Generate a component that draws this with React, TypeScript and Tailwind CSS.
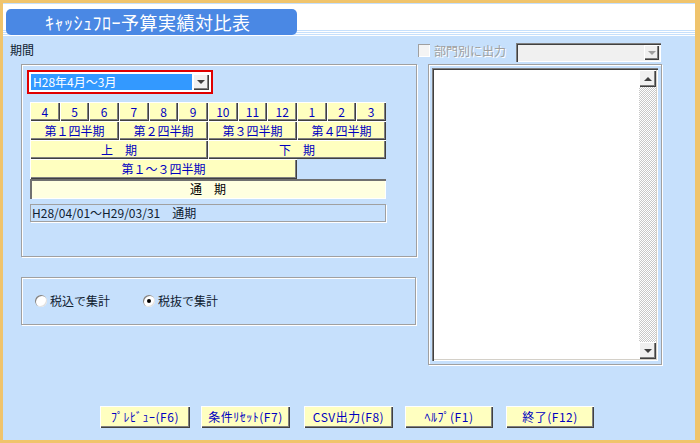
import React from 'react'
import clsx from 'clsx'

const raised = 'shadow-[inset_1px_1px_0_#ffffff,inset_-1px_-1px_0_#404040,inset_-2px_-2px_0_#808080]'
const etched = 'border border-[#a0a0a0] shadow-[inset_1px_1px_0_#ffffff,1px_1px_0_#ffffff]'

function Btn({ children, className }: { children?: React.ReactNode; className?: string }) {
  return (
    <div className={clsx('flex items-center justify-center bg-[#ffffc0] text-[#0000c0] text-[12px] leading-none', raised, className)}>
      {children}
    </div>
  )
}

function Arrow({ up, color = '#404040' }: { up?: boolean; color?: string }) {
  return (
    <svg width="8" height="4" viewBox="0 0 8 4">
      <polygon points={up ? '0,4 8,4 4,0' : '0,0 8,0 4,4'} fill={color} />
    </svg>
  )
}

function Radio({ checked, label }: { checked?: boolean; label: string }) {
  return (
    <div className="flex items-center">
      <div className="w-[12px] h-[12px] rounded-full bg-white flex items-center justify-center shadow-[inset_1px_1px_0_#808080,inset_-1px_-1px_0_#e0e0e0]">
        {checked && <div className="w-[4px] h-[4px] rounded-full bg-black" />}
      </div>
      <span className="ml-[3px] text-[12px] text-[#102030]">{label}</span>
    </div>
  )
}

const months = ['4', '5', '6', '7', '8', '9', '10', '11', '12', '1', '2', '3']
const quarters = ['第１四半期', '第２四半期', '第３四半期', '第４四半期']
const bottomButtons = [
  { label: 'ﾌﾟﾚﾋﾞｭｰ(F6)', cls: 'ml-[97px] w-[90px]' },
  { label: '条件ﾘｾｯﾄ(F7)', cls: 'ml-[11px] w-[89px]' },
  { label: 'CSV出力(F8)', cls: 'ml-[14px] w-[89px]' },
  { label: 'ﾍﾙﾌﾟ(F1)', cls: 'ml-[12px] w-[88px]' },
  { label: '終了(F12)', cls: 'ml-[13px] w-[88px]' },
]

export default function App() {
  return (
    <div className="w-[700px] h-[443px] bg-[#f0c46c] pt-[3px] pl-[3px] pr-[5px] pb-[3px] font-['Noto_Sans_CJK_JP',sans-serif]">
      <div className="h-full flex flex-col bg-[#c6e0fc]">
        {/* title bar */}
        <div className="relative h-[34px] bg-white border-t border-[#c6e0fc] shrink-0">
          <div className="absolute inset-x-0 bottom-0 h-[8px] bg-[repeating-linear-gradient(to_bottom,#ffffff_0px,#ffffff_1px,#c6e0fc_1px,#c6e0fc_2px)]" />
          <div className="relative ml-[3px] mt-[5px] h-[26px] w-[291px] rounded-[5px] bg-[#4a88e4] text-white text-[18px] leading-[26px] pl-[39px] tracking-[0.5px]">
            ｷｬｯｼｭﾌﾛｰ予算実績対比表
          </div>
        </div>

        <div className="flex">
          {/* left column */}
          <div className="w-[415px] shrink-0">
            <div className="h-[27px] pl-[7px] pt-[5px] text-[12px] leading-[16px] text-[#102030]">期間</div>
            <div className={clsx('ml-[18px] w-[396px] h-[193px] p-[5px]', etched)}>
              <div className="w-[186px] h-[24px] border-2 border-[#e00000] flex bg-white p-[2px] gap-[1px]">
                <div className="flex-1 bg-[#3399ff] text-white text-[12px] leading-[16px] pl-[2px]">H28年4月～3月</div>
                <div className={clsx('w-[16px] bg-[#f0f0f0] flex items-center justify-center', raised)}>
                  <Arrow />
                </div>
              </div>
              <div className="ml-[3px] mt-[8px] w-[356px] grid grid-cols-12 grid-rows-[19px_19px_19px_20px_20px]">
                {months.map(m => (
                  <Btn key={m}>{m}</Btn>
                ))}
                {quarters.map(q => (
                  <Btn key={q} className="col-span-3">{q}</Btn>
                ))}
                <Btn className="col-span-6">上　期</Btn>
                <Btn className="col-span-6">下　期</Btn>
                <Btn className="col-span-9">第１～３四半期</Btn>
                <div className="col-span-3" />
                <div className="col-span-12 flex items-center justify-center bg-[#ffffe0] text-black text-[12px] leading-none shadow-[inset_2px_2px_0_#707070,inset_-1px_-1px_0_#ffffff]">
                  通　期
                </div>
              </div>
              <div className="ml-[3px] mt-[5px] w-[356px] h-[18px] border border-[#a0a0a0] shadow-[1px_1px_0_#ffffff] text-[12px] leading-[16px] text-[#102030] pl-[1px]">
                H28/04/01～H29/03/31　通期
              </div>
            </div>
            <div className={clsx('mt-[20px] ml-[18px] w-[395px] h-[48px] flex items-center pl-[13px]', etched)}>
              <Radio label="税込で集計" />
              <div className="ml-[33px]">
                <Radio checked label="税抜で集計" />
              </div>
            </div>
          </div>

          {/* right column */}
          <div className="flex-1">
            <div className="h-[27px] pt-[6px] flex items-start">
              <div className="mt-[1px] w-[12px] h-[13px] bg-[#f4f4f4] shadow-[inset_1px_1px_0_#a0a0a0,inset_-1px_-1px_0_#ffffff]" />
              <span className="ml-[4px] text-[12px] leading-[15px] text-[#a0a0a0] [text-shadow:1px_1px_0_#ffffff]">部門別に出力</span>
              <div className="ml-[10px] w-[145px] h-[19px] bg-[#f0f0f0] flex justify-end p-[2px] shadow-[inset_1px_1px_0_#808080,inset_2px_2px_0_#404040,inset_-1px_-1px_0_#ffffff]">
                <div className={clsx('w-[15px] bg-[#f0f0f0] flex items-center justify-center', raised)}>
                  <Arrow color="#a0a0a0" />
                </div>
              </div>
            </div>
            <div className={clsx('ml-[10px] w-[234px] h-[301px] p-[3px]', etched)}>
              <div className="h-full flex bg-white p-[2px] shadow-[inset_1px_1px_0_#808080,inset_2px_2px_0_#404040,inset_-1px_-1px_0_#ffffff,inset_-2px_-2px_0_#d4d0c8]">
                <div className="flex-1" />
                <div className="w-[17px] flex flex-col">
                  <div className={clsx('h-[17px] bg-[#f0f0f0] flex items-center justify-center', raised)}>
                    <Arrow up />
                  </div>
                  <div className="flex-1 bg-[repeating-conic-gradient(#c8c8c8_0%_25%,#ffffff_0%_50%)] bg-[length:2px_2px]" />
                  <div className={clsx('h-[17px] bg-[#f0f0f0] flex items-center justify-center', raised)}>
                    <Arrow />
                  </div>
                </div>
              </div>
            </div>
          </div>
        </div>

        {/* bottom buttons */}
        <div className="mt-auto mb-[12px] h-[22px] flex">
          {bottomButtons.map(b => (
            <Btn key={b.label} className={clsx(b.cls, 'tracking-[0.5px]')}>{b.label}</Btn>
          ))}
        </div>
      </div>
    </div>
  )
}
